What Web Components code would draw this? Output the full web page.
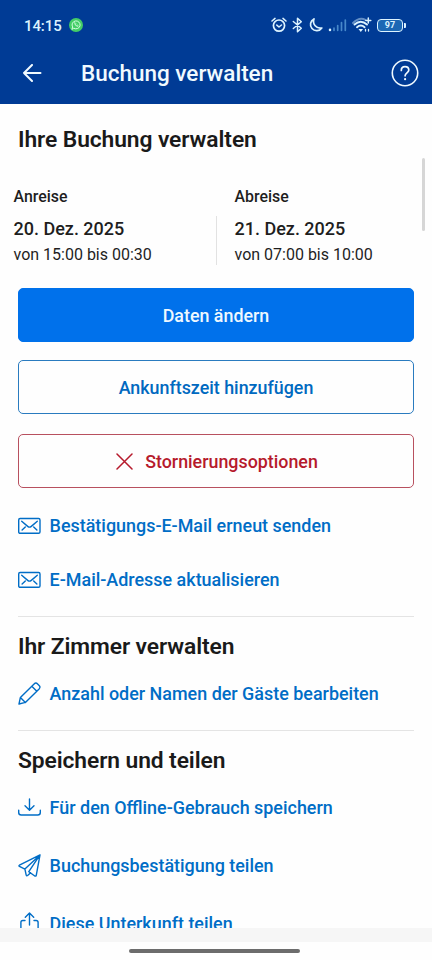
<!DOCTYPE html>
<html lang="de">
<head>
<meta charset="utf-8">
<title>Buchung verwalten</title>
<style>
html,body{margin:0;height:960px;overflow:hidden;background:#fefefe}
body{font-family:Roboto,"Liberation Sans",sans-serif;color:#1a1a1a}
</style>
</head>
<body>
<booking-app></booking-app>
<script>
const define = (name, html) => {
  const t = document.createElement('template');
  t.innerHTML = html;
  customElements.define(name, class extends HTMLElement {
    constructor() {
      super();
      this.attachShadow({mode: 'open'}).append(t.content.cloneNode(true));
    }
  });
};

const icons = {
  back: [20, 18, '<path d="M18.500 9H2M10 1 2 9l8 8" stroke-width="2"/>'],
  help: [28, 28, '<circle cx="14" cy="14" r="12.7" stroke-width="1.6"/><path d="M10.3 11.4c0-2.3 1.5-3.8 3.7-3.8s3.8 1.4 3.8 3.4c0 2.7-3.7 3-3.7 5.8" stroke-width="1.7"/><circle cx="14.1" cy="20.2" r="1.1" fill="currentColor" stroke="none"/>'],
  close: [17, 17, '<path d="m1 1 15 15M16 1 1 16" stroke-width="1.5"/>'],
  mail: [23, 23, '<rect x=".7" y="4.500" width="21.300" height="14.800" rx="1.400"/><path d="m3.700 7.200 6 5.200q1.800 1.500 3.600 0l6-5.200M4.100 16.100l3.200-3M18.900 16.100l-3.200-3"/>'],
  pen: [23, 23, '<path d="M1 22l1.4-6.6L16.1 1.9q1.8-1.7 3.5 0l1.5 1.5q1.7 1.7 0 3.5L7.4 20.4zM2.4 15.4l5 5M13.8 4.2l5 5"/>'],
  download: [23, 23, '<path d="M11.5 3v11M7 9.8l4.5 4.5L16 9.8M.7 14.2v2.3q0 2.5 2.5 2.5h16.6q2.5 0 2.5-2.5v-2.3"/>'],
  plane: [23, 23, '<path d="M22 .9 1.4 11.2q-.9.7 0 1.2l5.500 2.700L22 .9l-3.700 20.200q-.3 1.500-1.500.9l-6-4.300L22 .9M6.900 15.100l1.300 6q.4 1.200 1.400.4l3-2.700"/>'],
  share: [23, 23, '<path d="M11.5 13V1.3M7.3 5.2l4.2-4.1 4.2 4.1M7 8.5H4.9q-2 0-2 2V22h17.2V10.5q0-2-2-2H16"/>'],
  whatsapp: [14, 14, '<circle cx="7" cy="7" r="7" fill="#43cd66" stroke="none"/><g stroke="#d4ffe0" stroke-width="1"><path d="m3 11 .6-2.100a4 4 0 1 1 1.500 1.500z"/><path d="M5.500 5q0 2.800 3.300 3.600l.4-1-1-.6-.6.4-1-1 .3-.7-.6-.8z" stroke-width=".7"/></g>'],
  alarm: [16, 16, '<circle cx="8" cy="8.600" r="5.600" stroke-width="1.700"/><path d="M5.800 8.100 8 10l2.500-2M1 4 4 1.400M12 1.400 15 4" stroke-width="1.500"/>'],
  bluetooth: [11, 16, '<path d="m1.300 4.500 8 6.700L5.500 14.700V1.300l3.800 3.500-8 6.700" stroke-width="1.500"/>'],
  moon: [15, 16, '<path d="M6 1.900A6.200 6.200 0 1 0 13.800 11 6.800 6.800 0 0 1 6 1.900z" stroke-width="1.700"/>'],
  signal: [19, 14, '<path d="M2 11.800v.2" stroke-width="2.500"/><path d="M6 10.200V12.300M9.700 7.500v4.800M13.500 4.500v7.800M17.300 2v10.300" stroke="#5fa3dc" stroke-width="1.700" opacity=".75"/>'],
  wifi: [20, 16, '<path d="M1 6Q7.500-.5 13.500 2.900" opacity=".45" stroke-width="1.900"/><path d="M2.500 7.500q6.300-5.700 12.500 0M5 10.200q3.800-3.300 7.600 0" stroke-width="1.900"/><path d="M6.500 12.100h4.600L8.800 14.900z" fill="currentColor" stroke="none"/><path d="M16.300 1v5M13.800 3.500h5" stroke-width="1.500"/><path d="M13.500 12.500v1.500M16.500 12.500v1.500" stroke-width="1.300"/>']
};
customElements.define('ui-icon', class extends HTMLElement {
  connectedCallback() {
    const [w, h, body] = icons[this.getAttribute('name')];
    this.attachShadow({mode: 'open'}).innerHTML =
      `<style>:host{display:block;flex:none}svg{display:block}</style>
       <svg width="${w}" height="${h}" viewBox="0 0 ${w} ${h}" fill="none" stroke="currentColor" stroke-width="1.4" stroke-linecap="round" stroke-linejoin="round">${body}</svg>`;
  }
});

define('status-bar', `<style>
:host{display:flex;align-items:center;height:50px;padding:0 26px 0 24px;color:#dcf3ff}
time{font-size:15px;font-weight:500;line-height:20px;letter-spacing:-.1px;margin-right:7px;padding-top:1px}
.right{display:flex;align-items:center;margin-left:auto;gap:5px}
.bat{display:flex;align-items:center;gap:1px}
.cell{box-sizing:border-box;width:26px;height:13px;border:1.5px solid currentColor;border-radius:4px;background:#1c68b4;font:700 9px/11px Roboto,sans-serif;text-align:center}
.tip{width:2px;height:5px;background:currentColor;border-radius:0 1px 1px 0}
</style>
<time>14:15</time><ui-icon name="whatsapp"></ui-icon>
<div class="right"><ui-icon name="alarm"></ui-icon><ui-icon name="bluetooth"></ui-icon><ui-icon name="moon"></ui-icon><ui-icon name="signal"></ui-icon><ui-icon name="wifi"></ui-icon>
<div class="bat"><div class="cell">97</div><div class="tip"></div></div></div>`);

define('app-bar', `<style>
:host{display:flex;align-items:center;height:54px;box-sizing:border-box;padding:0 13px 8px 22px;color:#f0faff}
.t{font-size:22.5px;font-weight:500;line-height:30px;margin-left:39px;flex:1;white-space:nowrap}
</style><ui-icon name="back"></ui-icon><div class="t"><slot></slot></div><ui-icon name="help"></ui-icon>`);

define('section-title', `<style>
:host{display:block;font-size:22.8px;letter-spacing:-.09px;font-weight:600;line-height:30px;white-space:nowrap}
</style><slot></slot>`);

define('stay-date', `<style>
:host{display:block;color:#1e1e1e;white-space:nowrap}
.l{font-size:15.9px;font-weight:500;line-height:24px;margin-bottom:7px}
.d{font-size:18px;font-weight:500;line-height:26px}
.h{font-size:16px;line-height:24px;padding-top:1px}
</style><div class="l"><slot name="label"></slot></div><div class="d"><slot name="day"></slot></div><div class="h"><slot></slot></div>`);

define('action-button', `<style>
:host{display:flex;box-sizing:border-box;height:54px;align-items:center;justify-content:center;gap:12px;border:1px solid #2a7bbf;border-radius:5px;color:#0069c0;font-size:17.85px;font-weight:500;white-space:nowrap}
:host([kind=primary]){background:#0071eb;border-color:#0071eb;color:#eef8ff}
:host([kind=danger]){border-color:#b8505f;color:#b61a2c;padding:0 0 1px 2px}
:host([kind=danger]) span{padding-top:2px}
</style><slot name="icon"></slot><span><slot></slot></span>`);

define('action-link', `<style>
:host{display:flex;align-items:center;gap:8.6px;height:30px;color:#006dc6;font-size:17.93px;font-weight:500;white-space:nowrap}
</style><slot name="icon"></slot><span><slot></slot></span>`);

define('page-rule', `<style>:host{display:block;height:1px;background:#e4e4e4}</style>`);

define('system-nav', `<style>
:host{display:flex;flex-direction:column;align-items:center;height:32px}
.g{height:14px;align-self:stretch;background:#f6f6f6}
.b{width:171px;height:4px;border-radius:2px;background:#6c6c6c;margin:7px 3px 0 0}
</style><div class="g"></div><div class="b"></div>`);

define('booking-app', `<style>
:host{display:flex;flex-direction:column;height:960px;position:relative;overflow:hidden}
header{background:#003b95;height:104px;flex:none}
main{flex:1;min-height:0;overflow:hidden;padding:0 18px}
.dates{display:grid;grid-template-columns:202px 1px 1fr;column-gap:0;margin:30px 0 0 -4.5px}
.dates i{background:#e2e2e2;margin-top:31px;height:49px}
.dates stay-date:last-child{margin-left:18px}
.buttons{display:flex;flex-direction:column;gap:18px;margin-top:21px}
.buttons :last-child{margin-top:2px}
.scroll{position:absolute;right:7px;top:158px;width:3px;height:73px;border-radius:2px;background:#d6d6d6}
</style>
<header><status-bar></status-bar><app-bar>Buchung verwalten</app-bar></header>
<main>
<section-title style="margin-top:21px">Ihre Buchung verwalten</section-title>
<div class="dates">
<stay-date><span slot="label">Anreise</span><span slot="day">20. Dez. 2025</span>von 15:00 bis 00:30</stay-date><i></i>
<stay-date><span slot="label">Abreise</span><span slot="day">21. Dez. 2025</span>von 07:00 bis 10:00</stay-date>
</div>
<div class="buttons">
<action-button kind="primary">Daten ändern</action-button>
<action-button>Ankunftszeit hinzufügen</action-button>
<action-button kind="danger"><ui-icon slot="icon" name="close"></ui-icon>Stornierungsoptionen</action-button>
</div>
<action-link style="margin-top:22px"><ui-icon slot="icon" name="mail"></ui-icon>Bestätigungs-E-Mail erneut senden</action-link>
<action-link style="margin-top:24px"><ui-icon slot="icon" name="mail"></ui-icon>E-Mail-Adresse aktualisieren</action-link>
<page-rule style="margin-top:22px"></page-rule>
<section-title style="margin-top:15px">Ihr Zimmer verwalten</section-title>
<action-link style="margin-top:16px"><ui-icon slot="icon" name="pen"></ui-icon>Anzahl oder Namen der Gäste bearbeiten</action-link>
<page-rule style="margin-top:22px"></page-rule>
<section-title style="margin-top:15px">Speichern und teilen</section-title>
<action-link style="margin-top:16px"><ui-icon slot="icon" name="download"></ui-icon>Für den Offline-Gebrauch speichern</action-link>
<action-link style="margin-top:28px"><ui-icon slot="icon" name="plane"></ui-icon>Buchungsbestätigung teilen</action-link>
<action-link style="margin-top:28px"><ui-icon slot="icon" name="share"></ui-icon>Diese Unterkunft teilen</action-link>
</main>
<system-nav></system-nav>
<div class="scroll"></div>`);
</script>
</body>
</html>
